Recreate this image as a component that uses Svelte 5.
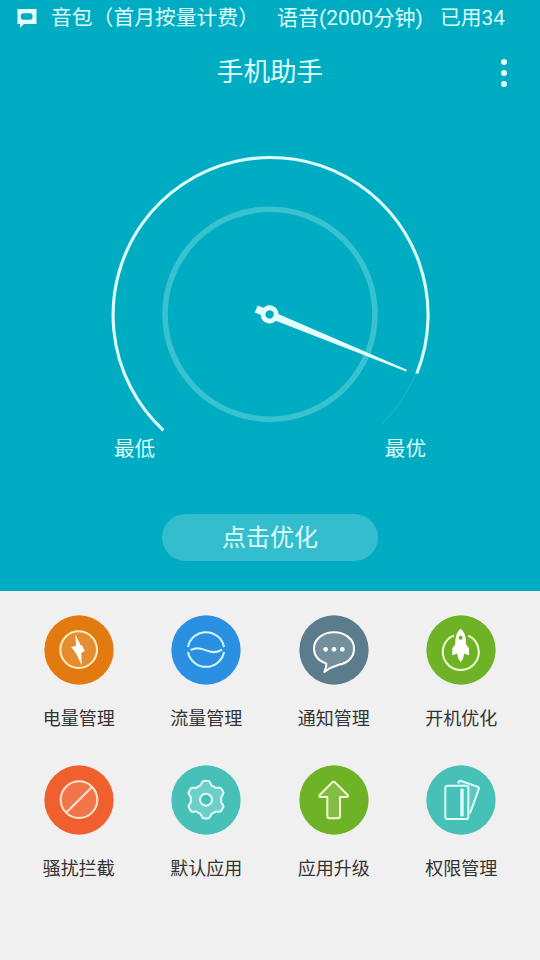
<script lang="ts">
  // Grid entries, in display order
  const tools = [
    { id: 'battery', label: '电量管理', color: '#e27a0f' },
    { id: 'traffic', label: '流量管理', color: '#2b8fe2' },
    { id: 'notice', label: '通知管理', color: '#5b7c8a' },
    { id: 'boot', label: '开机优化', color: '#6db325' },
    { id: 'block', label: '骚扰拦截', color: '#f0602f' },
    { id: 'apps', label: '默认应用', color: '#47c0b8' },
    { id: 'upgrade', label: '应用升级', color: '#6db325' },
    { id: 'rights', label: '权限管理', color: '#47c0b8' }
  ];

  // Needle angle, clockwise from 3 o'clock
  const needle = 22.3;

  // Gear outline: six soft lobes with flattened tips
  const gear: string[] = [];
  for (let deg = 0; deg < 360; deg += 3) {
    const a = ((deg - 90) * Math.PI) / 180;
    const wave = Math.cos((6 * deg * Math.PI) / 180);
    const r = 51 + 6 * Math.max(-0.9, Math.min(0.9, wave * 1.5));
    gear.push(`${(105 + r * Math.cos(a)).toFixed(1)},${(104 + r * Math.sin(a)).toFixed(1)}`);
  }
</script>

<div class="screen">
  <section class="hero">
    <div class="status">
      <svg class="message" viewBox="0 0 20 19">
        <path fill="#e4ffff" fill-rule="evenodd" d="M0.5 0H19.5V15H7L3 18.7V15H0.5Z M6.5 4.3Q3.7 4.3 3.7 7.5T6.5 10.8H13Q15.6 10.8 15.6 7.5T13 4.3Z" />
      </svg>
      <span class="plan">音包（首月按量计费）</span>
      <span class="voice">语音(2000分钟)</span>
      <span>已用34</span>
    </div>

    <header class="titlebar">
      <h1>手机助手</h1>
      <button class="more" aria-label="菜单"><i></i><i></i><i></i></button>
    </header>

    <div class="gauge">
      <svg viewBox="0 0 340 290" fill="none">
        <circle cx="170" cy="164.2" r="105" stroke="#38c1cf" stroke-width="5.6" />
        <path d="M316 223A157.5 157.5 0 0 1 281 275" stroke="#23b4c4" stroke-width="1" />
        <path d="M63.3 280.3A157.5 157.5 0 1 1 316.8 223.5" stroke="#dcffff" stroke-width="3.1" />
        <g transform="translate(169.6 164.4) rotate({needle})">
          <path d="M-14.5 -3.8H-7V3.8H-14.5Z M6 -3.7L148 -1V1L6 3.7Z" fill="#e4ffff" />
          <circle r="6.6" stroke="#e4ffff" stroke-width="5" />
        </g>
      </svg>
      <div class="range">
        <span>最低</span>
        <span>最优</span>
      </div>
    </div>

    <button class="optimize">点击优化</button>
  </section>

  <section class="tools">
    {#each tools as tool}
      <div class="tool">
        <svg class="icon" viewBox="0 0 210 210" fill="none" stroke="#fff" stroke-width="6" stroke-linejoin="round">
          <circle cx="105" cy="105" r="104" fill={tool.color} stroke="none" />
          {#if tool.id === 'battery'}
            <g stroke="#fff0c4">
              <circle cx="104" cy="104" r="55" fill="#fff" fill-opacity="0.15" />
              <path d="M94 58L110 91L115 92L122 108L112 113L113 151L97 117L94 113L82 96L96 92Z" fill="#fff" stroke="none" />
            </g>
          {:else if tool.id === 'traffic'}
            <g stroke="#d4fbff">
              <path d="M51 96A55 55 0 0 1 159 96M51 111A55 55 0 0 0 159 111" />
              <path d="M59 105C80 95 95 102 108 107S140 113 153 104" />
            </g>
          {:else if tool.id === 'notice'}
            <path d="M76 171C94 157 104 153 119 149C149 145 165 124 165 101C165 72 138 52 105 52S45 72 45 101C45 121 58 137 82 146C83 155 79 163 76 171Z" fill="#fff" fill-opacity="0.15" />
            <g fill="#fff" stroke="none">
              <circle cx="80" cy="103" r="7" />
              <circle cx="105" cy="103" r="7" />
              <circle cx="130" cy="103" r="7" />
            </g>
          {:else if tool.id === 'boot'}
            <path d="M84 61A54 54 0 1 0 127 62" stroke="#f4ffd8" />
            <path d="M104 41C115 50 121 64 120 88L129 100V121L116 116H92L79 121V100L88 88C87 64 93 50 104 41Z M94 115H114Q114 131 104 142Q94 131 94 115Z" fill="#fff" stroke="none" />
            <circle cx="104" cy="68" r="6" fill={tool.color} stroke="none" />
          {:else if tool.id === 'block'}
            <g stroke="#ffe6d2">
              <circle cx="105" cy="104" r="55" fill="#fff" fill-opacity="0.13" />
              <path d="M144 66L66 143" />
            </g>
          {:else if tool.id === 'apps'}
            <g stroke="#e0fffc">
              <polygon points={gear.join(' ')} fill="#fff" fill-opacity="0.22" />
              <circle cx="105" cy="104" r="18" fill={tool.color} />
            </g>
          {:else if tool.id === 'upgrade'}
            <path d="M99 53Q104 47 109 53L146 90Q149 96 143 96H123V154Q123 160 117 160H91Q85 160 85 154V96H65Q59 96 62 90Z" fill="#fff" fill-opacity="0.15" stroke="#f4ffd8" />
          {:else}
            <g stroke="#e0fffc">
              <path d="M96 55L98 51Q100 46 106 48L154 65Q160 67 158 73L132 145" fill="#fff" fill-opacity="0.12" />
              <rect x="58" y="62" width="69" height="100" rx="7" fill={tool.color} />
              <path d="M108 71V154" stroke-width="10" />
              <path d="M119 71V154" stroke-width="1" opacity="0.4" />
            </g>
          {/if}
        </svg>
        <span>{tool.label}</span>
      </div>
    {/each}
  </section>
</div>

<style>
  :global(body) {
    background: #f0f0f0;
  }

  .screen {
    width: 540px;
    height: 960px;
    overflow: hidden;
    background: #f0f0f0;
    font-family: Roboto, 'Noto Sans CJK SC', sans-serif;
    font-weight: 400;
  }

  button {
    padding: 0;
    border: 0;
    font: inherit;
    color: inherit;
  }

  .hero {
    height: 591px;
    display: flex;
    flex-direction: column;
    align-items: center;
    background: #00acc1;
    color: #dcffff;
  }

  .status {
    align-self: stretch;
    height: 36px;
    padding-left: 17px;
    display: flex;
    align-items: center;
    font-size: 20.8px;
    line-height: 34px;
    white-space: nowrap;
  }

  .message {
    width: 20px;
    height: 19px;
    margin-right: 14px;
  }

  .plan {
    width: 226px;
  }

  .voice {
    width: 163px;
    font-size: 21px;
  }

  .titlebar {
    align-self: stretch;
    height: 74px;
    display: grid;
    grid-template-columns: 72px 1fr 72px;
    align-items: center;
  }

  h1 {
    grid-column: 2;
    margin: 0 0 2px;
    font-size: 26.6px;
    font-weight: 400;
    line-height: 40px;
    text-align: center;
  }

  .more {
    display: flex;
    flex-direction: column;
    align-items: center;
    gap: 5px;
    background: none;
  }

  .more i {
    width: 6px;
    height: 6px;
    border-radius: 50%;
    background: #e4ffff;
  }

  .gauge {
    width: 340px;
    margin-top: 39.5px;
  }

  .gauge svg {
    display: block;
    width: 340px;
    height: 290px;
    margin-bottom: -5px;
  }

  .range {
    display: flex;
    justify-content: space-between;
    padding: 0 14px;
    font-size: 20.6px;
    line-height: 28px;
  }

  .optimize {
    width: 216px;
    height: 47px;
    margin-top: 51.5px;
    padding-top: 1px;
    border-radius: 24px;
    background: #33bdcd;
    font-size: 24px;
    line-height: 46px;
  }

  .tools {
    display: grid;
    grid-template-columns: repeat(4, 1fr);
    grid-auto-rows: 150px;
    padding: 24px 15px 0;
  }

  .tool {
    display: flex;
    flex-direction: column;
    align-items: center;
    color: #333;
    font-size: 18px;
    line-height: 26px;
  }

  .icon {
    width: 70px;
    height: 70px;
    margin-bottom: 21px;
  }
</style>
